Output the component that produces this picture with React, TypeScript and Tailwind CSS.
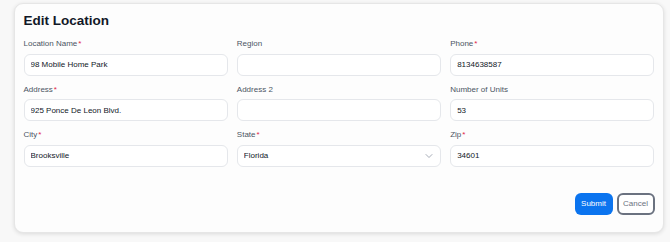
import { useState } from 'react';

type Field = {
  label: string;
  value: string;
  required?: boolean;
  select?: boolean;
};

const fields: Field[] = [
  { label: 'Location Name', value: '98 Mobile Home Park', required: true },
  { label: 'Region', value: '' },
  { label: 'Phone', value: '8134638587', required: true },
  { label: 'Address', value: '925 Ponce De Leon Blvd.', required: true },
  { label: 'Address 2', value: '' },
  { label: 'Number of Units', value: '53' },
  { label: 'City', value: 'Brooksville', required: true },
  { label: 'State', value: 'Florida', required: true, select: true },
  { label: 'Zip', value: '34601', required: true },
];

const FormField = ({ field }: { field: Field }) => {
  const [value, setValue] = useState(field.value);

  return (
    <div className="flex flex-col">
      <label className="text-[8px] leading-[10px] text-[#4b5563] mb-[4.5px]">
        {field.label}
        {field.required && <span className="text-[#e11d48] ml-[1px]">*</span>}
      </label>
      {field.select ? (
        <div className="relative h-[22px]">
          <select
            value={value}
            onChange={(e) => setValue(e.target.value)}
            className="block appearance-none w-full h-[22px] rounded-[6px] border border-[#e5e7eb] bg-white px-[6px] text-[8px] text-[#111827] outline-none"
          >
            <option>Florida</option>
            <option>Georgia</option>
            <option>Alabama</option>
          </select>
          {/* 下拉箭头 */}
          <svg
            className="absolute right-[8px] top-1/2 -translate-y-1/2 pointer-events-none"
            width="8"
            height="5"
            viewBox="0 0 8 5"
            fill="none"
          >
            <path d="M1 1l3 3 3-3" stroke="#9ca3af" strokeWidth="0.9" strokeLinecap="round" strokeLinejoin="round" />
          </svg>
        </div>
      ) : (
        <input
          type="text"
          value={value}
          onChange={(e) => setValue(e.target.value)}
          className="block w-full h-[22px] rounded-[6px] border border-[#e5e7eb] bg-white px-[6px] text-[8px] text-[#111827] outline-none"
        />
      )}
    </div>
  );
};

const App = () => {
  return (
    <div
      className="w-[670px] h-[242px] bg-[#f8f8f8] pt-[3px] pl-[14px]"
      style={{ fontFamily: '"Liberation Sans", Arial, sans-serif' }}
    >
      <div className="w-[650px] h-[230px] bg-[#fdfdfd] border border-[#e6e6e6] rounded-[9px] shadow-[0_1px_4px_rgba(0,0,0,0.12)] px-[8.5px] pt-[9px] flex flex-col">
        <h1 className="text-[13.5px] leading-[16px] font-bold text-[#111827]">Edit Location</h1>

        <div className="grid grid-cols-3 gap-x-[9px] gap-y-[9px] mt-[10px]">
          {fields.map((field) => (
            <FormField key={field.label} field={field} />
          ))}
        </div>

        <div className="flex justify-end gap-[4px] mt-[26px]">
          <button className="h-[22px] w-[38px] rounded-[6px] bg-[#0b74ef] text-white text-[8px]">
            Submit
          </button>
          <button className="h-[22px] w-[38px] rounded-[6px] border-2 border-[#6b7280] bg-white text-[#6b7280] text-[8px]">
            Cancel
          </button>
        </div>
      </div>
    </div>
  );
};

export default App;
